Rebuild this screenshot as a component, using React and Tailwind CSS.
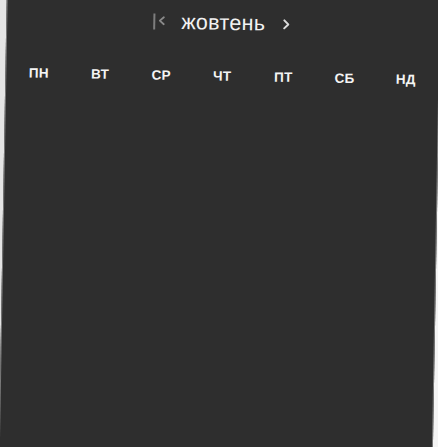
import React from "react";

const days = ["ПН", "ВТ", "СР", "ЧТ", "ПТ", "СБ", "НД"];

export default function App() {
  return (
    <div className="w-[438px] h-[447px] overflow-hidden bg-gradient-to-r from-[#e4e4e4] to-[#f4f4f4]">
      <div
        className="w-[434px] h-[480px] ml-[7.35px] mt-[-20px] origin-top-left rotate-1 bg-[#2e2e2e] border-l border-r border-[#7a7a7a] flex flex-col"
        style={{ fontFamily: '"Liberation Sans", Arial, sans-serif' }}
      >
        <div className="mt-[27px] grid grid-cols-[1fr_auto_1fr] items-center h-6">
          <div className="flex justify-end items-center pr-[15px] gap-[2px]">
            <div className="w-[2px] h-[16px] bg-[#7d7d7d]" />
            <svg width="9" height="10" viewBox="0 0 9 10" className="mt-[-2px]">
              <path d="M6.5 1.5 L2.5 5 L6.5 8.5" fill="none" stroke="#8a8a8a" strokeWidth="1.8" strokeLinecap="round" strokeLinejoin="round" />
            </svg>
          </div>
          <div className="text-[21.5px] leading-6 text-[#f2f2f2] tracking-[0.3px]">жовтень</div>
          <div className="flex justify-start items-center pl-[17px]">
            <svg width="8" height="11" viewBox="0 0 8 11">
              <path d="M2 1.5 L6 5.5 L2 9.5" fill="none" stroke="#dcdcdc" strokeWidth="2" strokeLinecap="round" strokeLinejoin="round" />
            </svg>
          </div>
        </div>
        <div className="mt-[34px] grid grid-cols-7 px-[2px]">
          {days.map((d) => (
            <div key={d} className="text-center text-[13.5px] leading-4 font-bold text-[#f4f4f4] tracking-[0.3px]">
              {d}
            </div>
          ))}
        </div>
      </div>
    </div>
  );
}
